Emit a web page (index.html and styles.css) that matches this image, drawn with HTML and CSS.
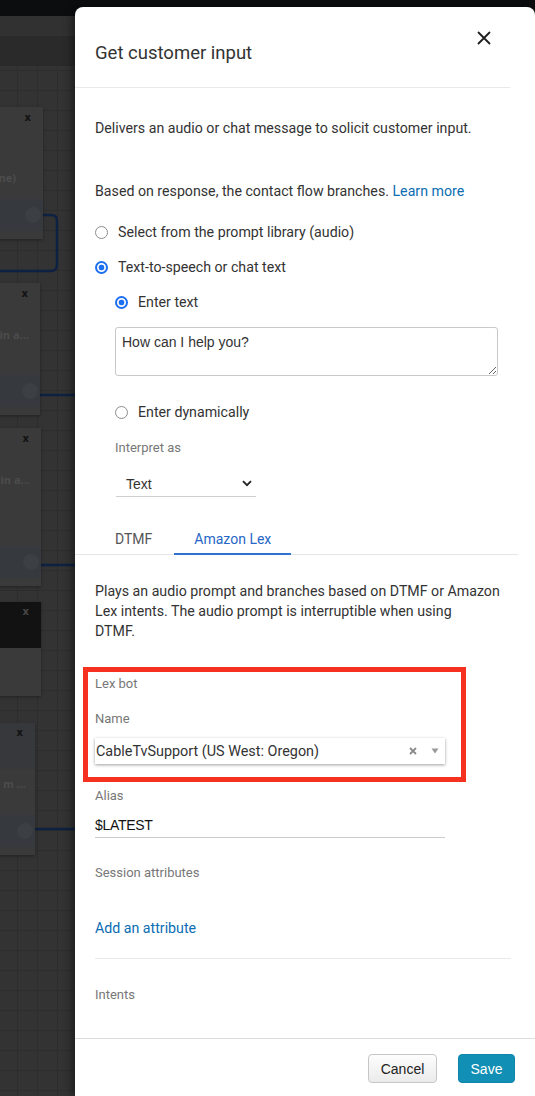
FILE: index.html
```html
<!DOCTYPE html>
<html lang="en">
<head>
<meta charset="utf-8">
<title>Get customer input</title>
<link rel="stylesheet" href="styles.css">
</head>
<body>
<div class="backdrop">
  <div class="topbar"></div>
  <div class="strip1"></div>
  <div class="strip2"></div>
  <div class="canvas">
    <svg class="wires" width="80" height="1030" viewBox="0 0 80 1030" aria-hidden="true">
      <path d="M41 149 H51 Q57 149 57 155 V199 Q57 205 51 205 H0" fill="none" stroke="#0e2142" stroke-width="2.5"/>
      <path d="M40 329 H80" fill="none" stroke="#0e2142" stroke-width="2.5"/>
      <path d="M41 499 H80" fill="none" stroke="#0e2142" stroke-width="2.5"/>
      <path d="M35 763 H80" fill="none" stroke="#0e2142" stroke-width="2.5"/>
    </svg>
    <div class="node n1">
      <div class="nhead"><span class="nx">x</span></div>
      <div class="ntext">ne)</div>
      <div class="nfoot"><span class="port"></span></div>
    </div>
    <div class="node n2">
      <div class="nhead"><span class="nx">x</span></div>
      <div class="ntext">in a...</div>
      <div class="nfoot"><span class="port"></span></div>
    </div>
    <div class="node n3">
      <div class="nhead"><span class="nx">x</span></div>
      <div class="ntext">in a...</div>
      <div class="nfoot"><span class="port"></span></div>
    </div>
    <div class="node n4">
      <div class="nhead dark"><span class="nx">x</span></div>
    </div>
    <div class="node n5">
      <div class="nhead tall"><span class="nx">x</span></div>
      <div class="ntext">m ...</div>
      <div class="nfoot"><span class="port"></span></div>
    </div>
  </div>
</div>

<aside class="drawer">
  <header class="dhead">
    <h1 class="dtitle">Get customer input</h1>
    <svg class="dclose" width="14" height="14" viewBox="0 0 14 14" aria-label="Close">
      <path d="M1.5 1.5 L12.5 12.5 M12.5 1.5 L1.5 12.5" stroke="#1e1e1e" stroke-width="1.8" stroke-linecap="round"/>
    </svg>
  </header>

  <div class="dbody">
    <p class="txt">Delivers an audio or chat message to solicit customer input.</p>
    <p class="txt p2">Based on response, the contact flow branches. <a class="link">Learn more</a></p>

    <div class="radios">
      <div class="radio-row"><span class="radio"></span>Select from the prompt library (audio)</div>
      <div class="radio-row"><span class="radio on"></span>Text-to-speech or chat text</div>
      <div class="indent">
        <div class="radio-row"><span class="radio on"></span>Enter text</div>
        <textarea class="ta">How can I help you?</textarea>
        <div class="radio-row dyn"><span class="radio"></span>Enter dynamically</div>
        <div class="lbl interp">Interpret as</div>
        <div class="tsel">
          <span>Text</span>
          <svg width="10" height="7" viewBox="0 0 10 7" aria-hidden="true"><path d="M1 1.2 L5 5.2 L9 1.2" fill="none" stroke="#222" stroke-width="1.8"/></svg>
        </div>
      </div>
    </div>

    <div class="tabs">
      <div class="tab">DTMF</div>
      <div class="tab active">Amazon Lex</div>
    </div>

    <p class="txt plays">Plays an audio prompt and branches based on DTMF or Amazon Lex intents. The audio prompt is interruptible when using<br>DTMF.</p>

    <div class="lex">
      <div class="lbl">Lex bot</div>
      <div class="lbl name">Name</div>
      <div class="nsel">
        <span class="nval">CableTvSupport (US West: Oregon)</span>
        <svg class="clr" width="8" height="8" viewBox="0 0 8 8" aria-hidden="true"><path d="M1 1 L7 7 M7 1 L1 7" stroke="#8a8a8a" stroke-width="1.8"/></svg>
        <svg class="arr" width="8" height="6" viewBox="0 0 8 6" aria-hidden="true"><path d="M0.5 0.5 H7.5 L4 5.5 Z" fill="#9a9a9a"/></svg>
      </div>
    </div>

    <div class="lbl alias">Alias</div>
    <div class="field">$LATEST</div>

    <div class="lbl sess">Session attributes</div>
    <a class="link add">Add an attribute</a>
    <div class="sep"></div>
    <div class="lbl intents">Intents</div>
  </div>

  <footer class="dfoot">
    <button class="btn cancel">Cancel</button>
    <button class="btn save">Save</button>
  </footer>
</aside>
</body>
</html>
```

FILE: styles.css
```css
* { box-sizing: border-box; }
html, body { margin: 0; padding: 0; }
body {
  width: 535px;
  height: 1096px;
  overflow: hidden;
  position: relative;
  background: #323232;
  font-family: Roboto, "Liberation Sans", sans-serif;
}

/* ---------- dimmed backdrop ---------- */
.backdrop { height: 1096px; display: flex; flex-direction: column; }
.topbar { height: 16px; background: #0c0d0f; }
.strip1 { height: 20px; background: #313131; }
.strip2 { height: 30px; background: #2a2a2a; }
.canvas {
  flex: 1;
  position: relative;
  overflow: hidden;
  background-color: #333333;
  background-image:
    linear-gradient(90deg, #2d2d2d 1px, transparent 1px),
    linear-gradient(#2d2d2d 1px, transparent 1px);
  background-size: 20px 20px;
  background-position: 17px 4px;
}
.wires { position: absolute; left: 0; top: 0; }

.node {
  position: absolute;
  left: -60px;
  background: #3a3a3a;
  box-shadow: 0 1px 3px rgba(0,0,0,.35);
  display: flex;
  flex-direction: column;
  padding-bottom: 8px;
}
.n1 { top: 41px; width: 103px; height: 132px; }
.n2 { top: 217px; width: 100px; height: 132px; }
.n3 { top: 362px; width: 101px; height: 158px; }
.n4 { top: 536px; width: 101px; height: 94px; padding-bottom: 0; }
.n5 { top: 657px; width: 95px; height: 132px; }

.nhead {
  height: 22px;
  display: flex;
  justify-content: flex-end;
  align-items: center;
  padding-right: 12px;
}
.nhead.dark { height: 46px; background: #121212; align-items: flex-start; padding-top: 4px; }
.nhead.dark .nx { color: #474747; }
.nhead.tall { height: 46px; background: #36383b; align-items: flex-start; padding-top: 4px; }
.nx { font: bold 10px/12px "DejaVu Sans", sans-serif; color: #111; }

.ntext {
  margin-top: 20px;
  font: bold 11px/14px "Open Sans", sans-serif;
  color: #4c4c4c;
  white-space: nowrap;
  text-align: right;
  padding-right: 12px;
}
.n1 .ntext { margin-top: 42px; padding-right: 27px; }
.n2 .ntext, .n3 .ntext { margin-top: 23px; padding-right: 11px; }
.n5 .ntext { margin-top: 8px; padding-right: 9px; }

.nfoot {
  margin-top: auto;
  height: 32px;
  background: #363a3e;
  display: flex;
  justify-content: flex-end;
  align-items: center;
  padding-right: 2px;
}
.port { width: 16px; height: 16px; border-radius: 50%; background: #3c3f43; }

/* ---------- drawer ---------- */
.drawer {
  position: absolute;
  left: 75px;
  top: 7px;
  width: 460px;
  height: 1089px;
  background: #fff;
  border-radius: 8px 8px 0 0;
  box-shadow: -3px 0 9px rgba(0,0,0,.45);
  display: flex;
  flex-direction: column;
  color: #333;
}
.dhead {
  height: 81px;
  margin-right: 25px;
  border-bottom: 1px solid #e8e8e8;
  display: flex;
  justify-content: space-between;
  align-items: flex-start;
  padding: 24px 0 0 20px;
  flex: none;
}
.dtitle {
  margin: 10px 0 0;
  font-size: 18.5px;
  line-height: 24px;
  font-weight: 400;
  color: #333;
}
.dclose { margin-right: 19px; flex: none; }

.dbody {
  flex: 1;
  padding: 30px 24px 0 20px;
  overflow: hidden;
}
.txt { margin: 0; font-size: 14.2px; line-height: 20px; color: #333; }
.p2 { margin-top: 43px; }
.link { color: #0b6db3; text-decoration: none; cursor: pointer; }

.radios { margin-top: 21px; }
.radio-row {
  display: flex;
  align-items: center;
  height: 20px;
  font-size: 14.2px;
  color: #333;
  margin-bottom: 15px;
}
.radio {
  width: 13px;
  height: 13px;
  border-radius: 50%;
  border: 1px solid #8d8d8d;
  background: #fff;
  margin-right: 10px;
  flex: none;
}
.radio.on {
  border: 2px solid #1c6ff0;
  background: radial-gradient(circle, #1c6ff0 0 2.6px, #fff 3.2px);
}
.indent { padding-left: 20px; }
.ta {
  display: block;
  width: 383px;
  height: 49px;
  margin: 0;
  padding: 6px 6px;
  border: 1px solid #c9c9c9;
  border-radius: 3px;
  font-family: "Liberation Sans", Arial, sans-serif;
  font-size: 14px;
  line-height: 17px;
  color: #333;
  resize: vertical;
}
.radio-row.dyn { margin-top: 26px; margin-bottom: 0; }
.lbl { font-size: 13px; line-height: 18px; color: #777; }
.interp { margin-top: 17px; }
.tsel {
  margin-top: 14px;
  margin-left: 1px;
  width: 140px;
  height: 26px;
  border-bottom: 1px solid #cfcfcf;
  display: flex;
  align-items: center;
  justify-content: space-between;
  padding: 0 4px 0 10px;
  font-family: "Liberation Sans", Arial, sans-serif;
  font-size: 14px;
  color: #333;
}

.tabs {
  display: flex;
  gap: 2px;
  margin: 22px -7px 0 -20px;
  padding-left: 20px;
  border-bottom: 1px solid #e6e6e6;
}
.tab {
  padding: 10px 20px 4px;
  line-height: 20px;
  font-size: 14px;
  color: #555;
  border-bottom: 2px solid transparent;
  margin-bottom: -1px;
}
.tab.active { color: #2566c6; border-bottom-color: #2f72d2; }

.plays { margin-top: 26px; max-width: 416px; }

.lex { position: relative; margin-top: 34px; }
.lex::after {
  content: "";
  position: absolute;
  left: -12px;
  top: -8px;
  width: 373px;
  bottom: -18px;
  border: 5px solid #f7311f;
  pointer-events: none;
}
.name { margin-top: 17px; }
.nsel {
  margin-top: 10px;
  width: 350px;
  height: 26px;
  background: #fff;
  box-shadow: 0 1px 3px rgba(0,0,0,.38);
  display: flex;
  align-items: center;
  padding-left: 1px;
  font-size: 14.4px;
  color: #333;
}
.nval { flex: 1; white-space: nowrap; }
.clr { margin-right: 14px; }
.arr { margin-right: 6px; }

.alias { margin-top: 23px; }
.field {
  margin-top: 9px;
  width: 350px;
  height: 24px;
  border-bottom: 1px solid #cccccc;
  font-family: "Liberation Sans", Arial, sans-serif;
  font-size: 14px;
  line-height: 23px;
  letter-spacing: -0.3px;
  color: #111;
}
.sess { margin-top: 26px; }
.add { display: block; margin-top: 36px; font-size: 14.2px; line-height: 20px; }
.sep { margin-top: 20px; border-top: 1px solid #e9e9e9; }
.intents { margin-top: 27px; }

.dfoot {
  flex: none;
  height: 58px;
  border-top: 1px solid #dddddd;
  display: flex;
  justify-content: flex-end;
  align-items: flex-start;
  gap: 21px;
  padding: 15px 20px 0 0;
}
.btn {
  height: 29px;
  border-radius: 4px;
  font-family: "Liberation Sans", Arial, sans-serif;
  font-size: 14px;
  padding: 0;
  cursor: pointer;
}
.cancel {
  width: 69px;
  border: 1px solid #c6c6c6;
  background: linear-gradient(#fdfdfd, #ebebeb);
  color: #222;
}
.save {
  width: 57px;
  border: 1px solid #0e86ab;
  background: #118fb5;
  color: #fff;
}
```
